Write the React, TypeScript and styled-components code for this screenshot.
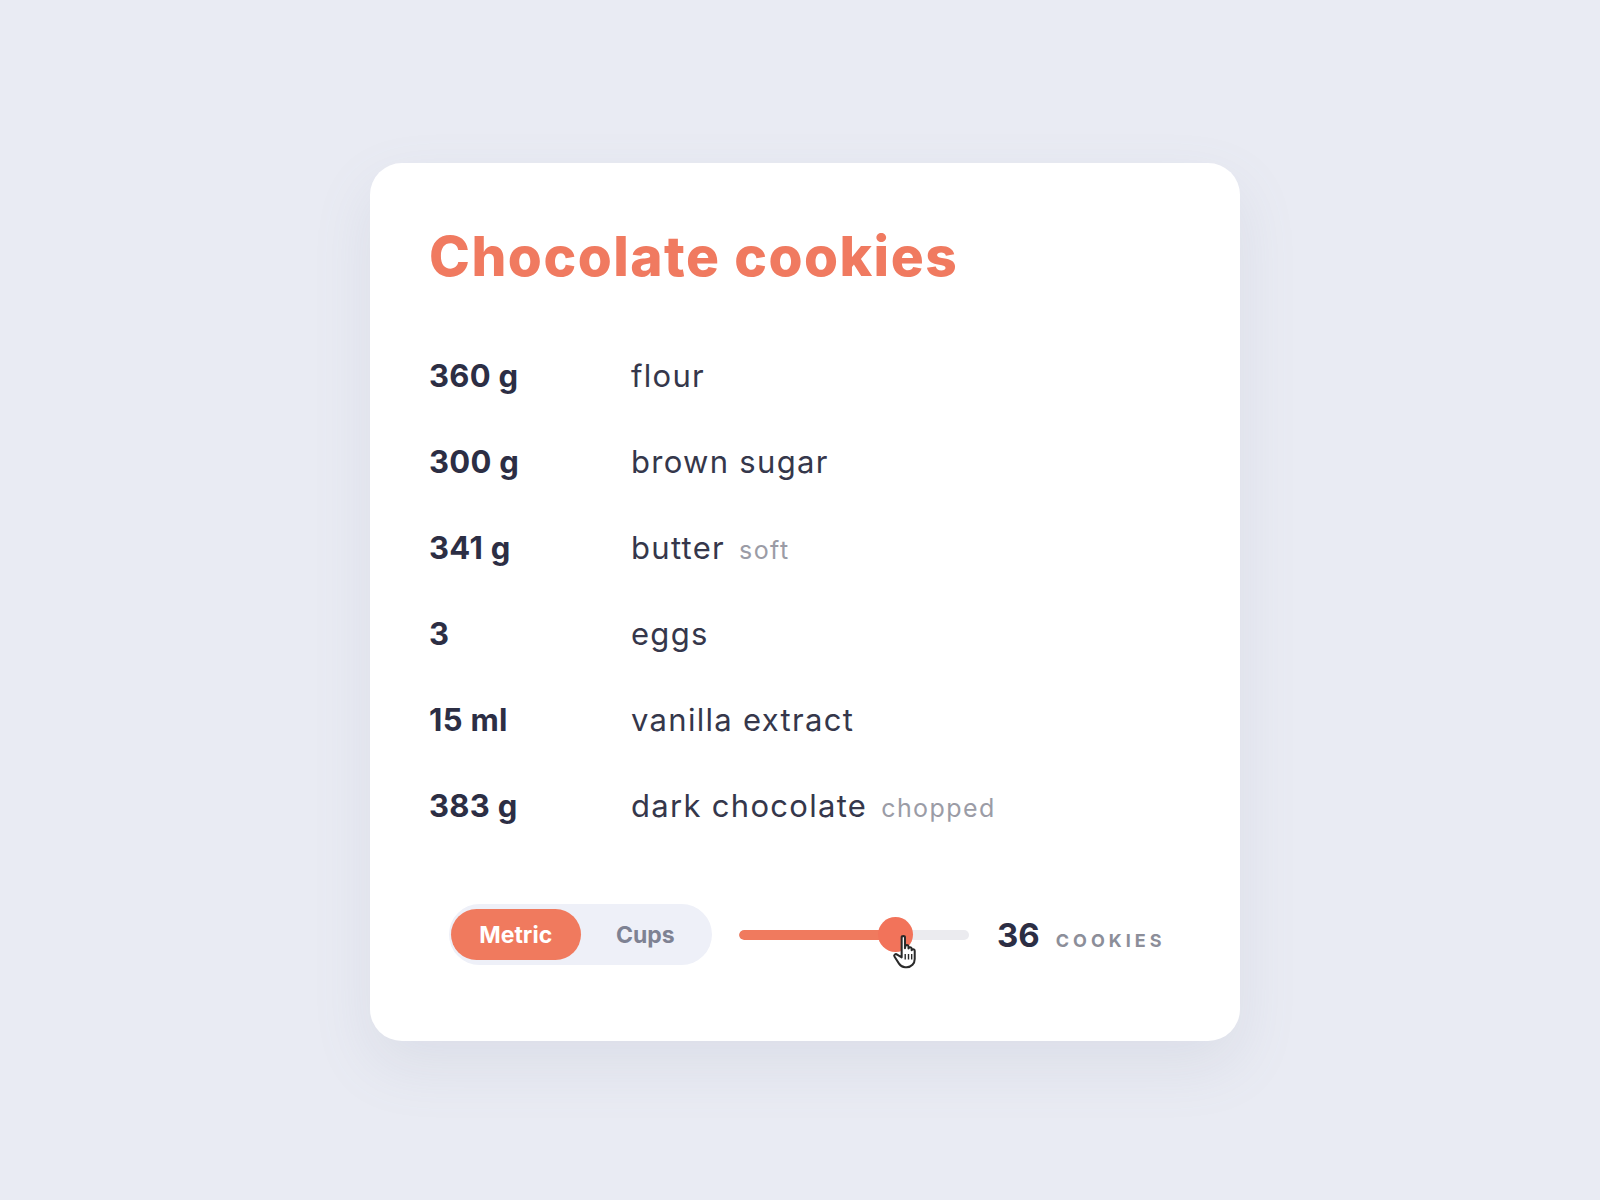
import React, { useState } from "react";
import styled, { createGlobalStyle } from "styled-components";

const GlobalStyle = createGlobalStyle`
  html, body {
    margin: 0;
    padding: 0;
    background: #e9ebf3;
  }
  body {
    font-family: "Inter", "Noto Sans", sans-serif;
    -webkit-font-smoothing: antialiased;
  }
`;

const ingredients = [
  { amount: "360 g", name: "flour" },
  { amount: "300 g", name: "brown sugar" },
  { amount: "341 g", name: "butter", note: "soft" },
  { amount: "3", name: "eggs" },
  { amount: "15 ml", name: "vanilla extract" },
  { amount: "383 g", name: "dark chocolate", note: "chopped" },
];

const Page = styled.div`
  width: 1600px;
  height: 1200px;
  padding: 163px 0 0 370px;
  box-sizing: border-box;
`;

const Card = styled.div`
  width: 870px;
  height: 878px;
  box-sizing: border-box;
  background: #ffffff;
  border-radius: 32px;
  box-shadow: 0 24px 60px rgba(120, 128, 160, 0.12);
  padding: 61px 59px 0 59px;
  display: flex;
  flex-direction: column;
`;

const Title = styled.h1`
  margin: 0;
  font-size: 55px;
  line-height: 64px;
  font-weight: 800;
  letter-spacing: 1.5px;
  color: #f07a60;
`;

const List = styled.div`
  margin-top: 68px;
  display: flex;
  flex-direction: column;
`;

const Row = styled.div`
  display: grid;
  grid-template-columns: 202px 1fr;
  align-items: baseline;
  height: 86px;
  line-height: 40px;
`;

const Amount = styled.span`
  font-size: 31px;
  font-weight: 700;
  color: #2c2e44;
  letter-spacing: 0.3px;
`;

const Name = styled.span`
  font-size: 31px;
  font-weight: 400;
  letter-spacing: 1.3px;
  color: #35374b;
`;

const Note = styled.span`
  margin-left: 14px;
  font-size: 25px;
  font-weight: 400;
  letter-spacing: 1.4px;
  color: #9b9ca6;
`;

const Controls = styled.div`
  margin-top: 32px;
  padding-left: 20px;
  display: flex;
  align-items: center;
`;

const Toggle = styled.div`
  display: flex;
  align-items: center;
  height: 61px;
  width: 263px;
  box-sizing: border-box;
  padding: 5px 2px;
  border-radius: 31px;
  background: #eef0f8;
`;

const ToggleButton = styled.button<{ $active?: boolean }>`
  height: 51px;
  width: 132px;
  border: none;
  border-radius: 26px;
  font-family: inherit;
  font-size: 23px;
  font-weight: 700;
  cursor: pointer;
  background: ${(p) => (p.$active ? "#f07a5e" : "transparent")};
  color: ${(p) => (p.$active ? "#ffffff" : "#7e8293")};
`;

const SliderWrap = styled.div`
  position: relative;
  margin-left: 27px;
  width: 230px;
  height: 40px;
  display: flex;
  align-items: center;
`;

const Track = styled.div`
  width: 100%;
  height: 10px;
  border-radius: 5px;
  background: #ebebef;
  overflow: hidden;
`;

const Fill = styled.div`
  height: 100%;
  background: #f07a5e;
  border-radius: 5px;
`;

const Thumb = styled.div`
  position: absolute;
  top: 50%;
  width: 35px;
  height: 35px;
  margin: -17.5px 0 0 -17.5px;
  border-radius: 50%;
  background: #f2735a;
`;

const Cursor = styled.svg`
  position: absolute;
  top: 18px;
  width: 34px;
  height: 38px;
  margin-left: -4px;
`;

const Count = styled.div`
  margin-left: 28px;
  display: flex;
  align-items: baseline;
`;

const Number = styled.span`
  font-size: 33px;
  font-weight: 700;
  color: #2c2e44;
`;

const Unit = styled.span`
  margin-left: 16px;
  font-size: 18px;
  font-weight: 700;
  letter-spacing: 4px;
  color: #8c8e99;
`;

export default function App() {
  const [metric, setMetric] = useState(true);
  const pct = 68;
  return (
    <Page>
      <GlobalStyle />
      <Card>
        <Title>Chocolate cookies</Title>
        <List>
          {ingredients.map((item) => (
            <Row key={item.name}>
              <Amount>{item.amount}</Amount>
              <Name>
                {item.name}
                {item.note && <Note>{item.note}</Note>}
              </Name>
            </Row>
          ))}
        </List>
        <Controls>
          <Toggle>
            <ToggleButton $active={metric} onClick={() => setMetric(true)}>
              Metric
            </ToggleButton>
            <ToggleButton $active={!metric} onClick={() => setMetric(false)}>
              Cups
            </ToggleButton>
          </Toggle>
          <SliderWrap>
            <Track>
              <Fill style={{ width: `${pct}%` }} />
            </Track>
            <Thumb style={{ left: `${pct}%` }} />
            <Cursor viewBox="0 0 26 30" style={{ left: `${pct}%` }}>
              <path
                d="M8 3.5c0-1.4 2.6-1.4 2.6 0V12l0.3-1.6c0.3-1.3 2.5-1.2 2.5 0.2v1.6c0.3-1.3 2.5-1.2 2.5 0.2v1.2c0.3-1.2 2.4-1 2.4 0.4v6.5c0 3.6-2.6 6.5-6.3 6.5h-1.3c-2.3 0-3.6-1-4.8-2.8l-3.6-5.6c-0.8-1.3 1-2.6 2.1-1.5L8 19.2z"
                fill="#ffffff"
                stroke="#2a2a2a"
                strokeWidth="1.6"
                strokeLinejoin="round"
              />
              <path d="M10.8 16.5v4.5M13.4 16.5v4.5M15.9 16.5v4.5" stroke="#2a2a2a" strokeWidth="1.1" />
            </Cursor>
          </SliderWrap>
          <Count>
            <Number>36</Number>
            <Unit>COOKIES</Unit>
          </Count>
        </Controls>
      </Card>
    </Page>
  );
}
